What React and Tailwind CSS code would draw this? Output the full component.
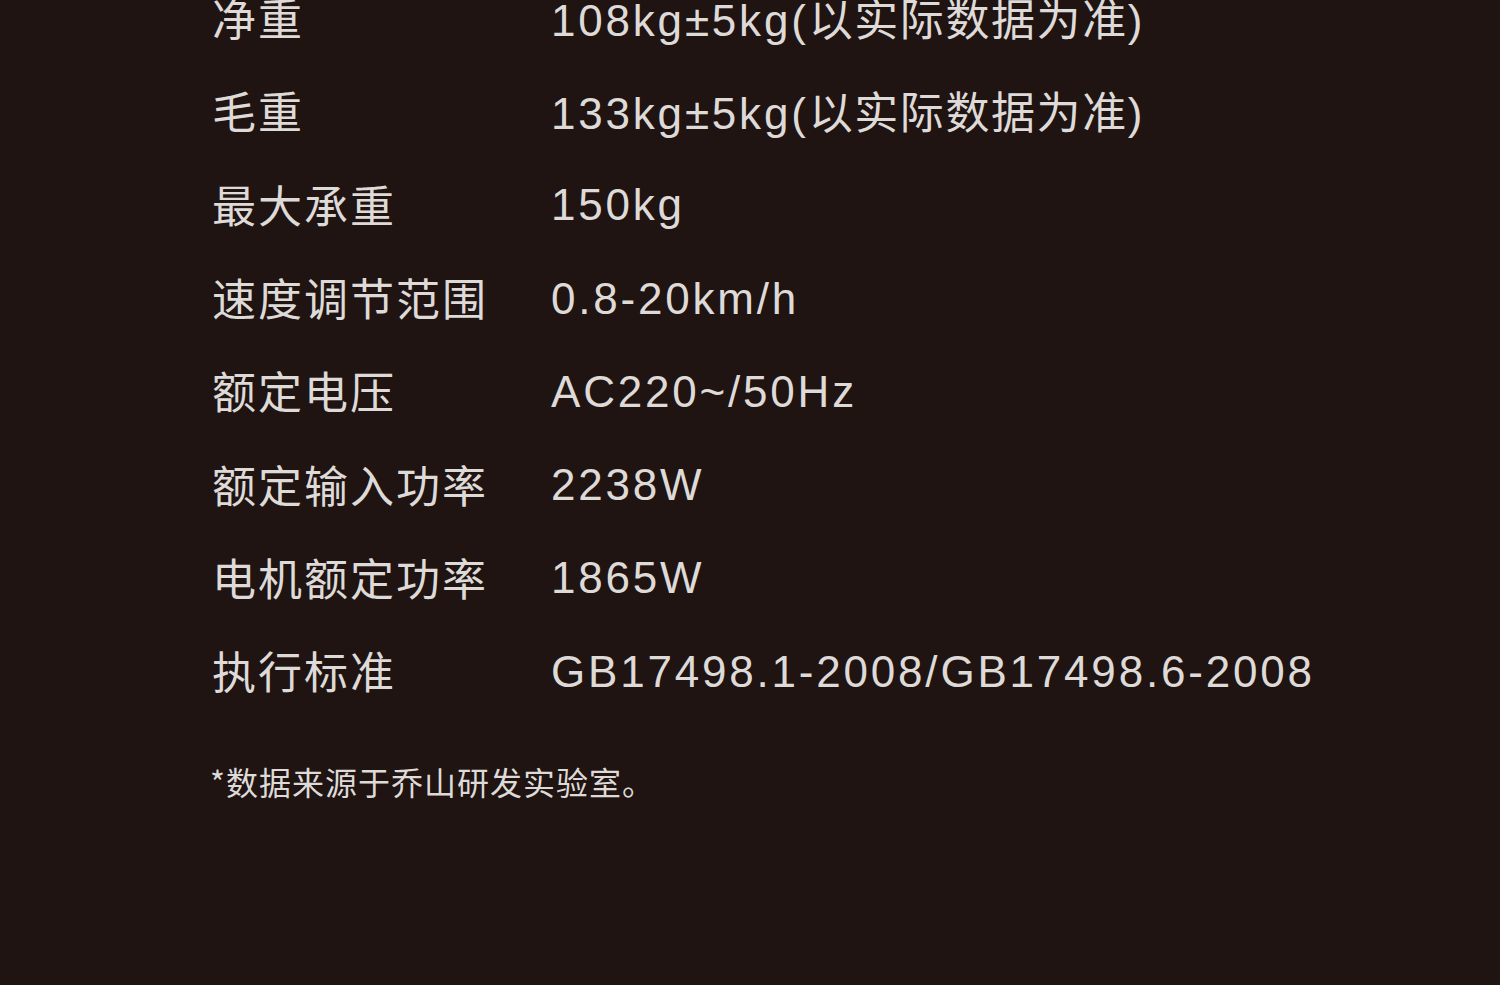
import React from 'react'

const specs = [
    { label: '净重', value: '108kg±5kg(', note: '以实际数据为准', tail: ')' },
    { label: '毛重', value: '133kg±5kg(', note: '以实际数据为准', tail: ')' },
    { label: '最大承重', value: '150kg' },
    { label: '速度调节范围', value: '0.8-20km/h' },
    { label: '额定电压', value: 'AC220~/50Hz' },
    { label: '额定输入功率', value: '2238W' },
    { label: '电机额定功率', value: '1865W' },
    { label: '执行标准', value: 'GB17498.1-2008/GB17498.6-2008' },
]

const App = () => {
    return (
        <div className="w-[1500px] h-[985px] overflow-hidden bg-[#1f1412] text-[#dedad8]">
            <div className="pl-[212px] mt-[-28px]">
                {specs.map((spec) => (
                    <div className="flex items-center h-[93.3px]" key={spec.label}>
                        <div className="w-[339px] shrink-0 text-[44px] leading-none tracking-[2px] -mt-[3px] font-['Noto_Sans_CJK_SC',sans-serif]">
                            {spec.label}
                        </div>
                        <div className="whitespace-nowrap text-[44px] leading-none tracking-[2.8px] font-['Liberation_Sans','Noto_Sans_CJK_SC',sans-serif]">
                            {spec.value}
                            {spec.note && (
                                <span className="tracking-[1.6px] font-['Noto_Sans_CJK_SC',sans-serif]">{spec.note}</span>
                            )}
                            {spec.tail}
                        </div>
                    </div>
                ))}
            </div>
            <p className="pl-[210px] mt-[43px] text-[32px] leading-[40px] tracking-[1px] font-['Noto_Sans_CJK_SC',sans-serif]">
                *数据来源于乔山研发实验室。
            </p>
        </div>
    )
}

export default App
